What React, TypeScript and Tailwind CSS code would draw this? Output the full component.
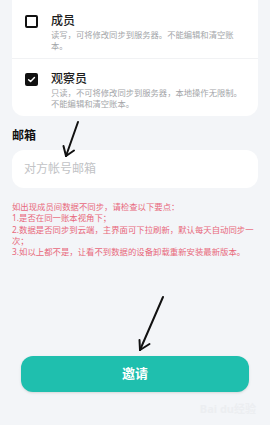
import React from "react";

type Role = {
  title: string;
  lines: string[];
  checked: boolean;
};

const roles: Role[] = [
  { title: "成员", lines: ["读写，可将修改同步到服务器。不能编辑和清空账", "本。"], checked: false },
  { title: "观察员", lines: ["只读，不可将修改同步到服务器，本地操作无限制。", "不能编辑和清空账本。"], checked: true },
];

const tips = [
  "如出现成员间数据不同步，请检查以下要点：",
  "1.是否在同一账本视角下；",
  "2.数据是否同步到云端，主界面可下拉刷新，默认每天自动同步一次；",
  "3.如以上都不是，让看不到数据的设备卸载重新安装最新版本。",
];

const CheckBox: React.FC<{ checked: boolean }> = ({ checked }) =>
  checked ? (
    <div className="flex h-[13px] w-[13px] items-center justify-center rounded-[2px] bg-[#111]">
      <svg width="9" height="9" viewBox="0 0 10 10" fill="none">
        <path d="M1.8 5.2 L4 7.3 L8.3 2.8" stroke="white" strokeWidth="1.6" strokeLinecap="round" strokeLinejoin="round" />
      </svg>
    </div>
  ) : (
    <div className="h-[13px] w-[13px] rounded-[2px] border-2 border-[#111]" />
  );

const RoleRow: React.FC<{ role: Role; first: boolean }> = ({ role, first }) => (
  <div
    className={
      first
        ? "flex pl-[13px] pr-[12px] pt-[25px] pb-[7px] border-b border-[#f1f2f4]"
        : "flex pl-[13px] pr-[12px] pt-[12px] pb-[7px]"
    }
  >
    <div className="mt-[2px] w-[26px] shrink-0">
      <CheckBox checked={role.checked} />
    </div>
    <div className="flex-1">
      <div className="text-[12px] leading-[16px] font-medium text-[#1c1c1c]">{role.title}</div>
      <div className="text-[8.3px] leading-[11px] text-[#a3a5a8]">
        {role.lines.map((l) => (
          <div key={l} className="whitespace-nowrap">{l}</div>
        ))}
      </div>
    </div>
  </div>
);

export default function App() {
  return (
    <div
      className="relative flex h-[425px] w-full flex-col overflow-hidden bg-[#f3f5f8]"
      style={{ fontFamily: '"Noto Sans", "Noto Sans CJK SC", sans-serif' }}
    >
      <div className="mx-3 -mt-3 rounded-xl bg-white">
        {roles.map((r, i) => (
          <RoleRow key={r.title} role={r} first={i === 0} />
        ))}
      </div>

      <div className="mx-3 mt-[13px] text-[12px] leading-[14px] font-bold text-[#111]">邮箱</div>

      <div className="mx-3 mt-[7px] flex h-[38px] items-center rounded-xl bg-white px-3 text-[12px] text-[#c2c3c6]">
        对方帐号邮箱
      </div>

      <div className="mx-3 mt-[13px] text-[8.4px] leading-[11.3px] text-[#e8687b]">
        {tips.map((t) => (
          <div key={t}>{t}</div>
        ))}
      </div>

      <button className="mx-[21px] mt-auto mb-[33px] flex h-[36px] items-center justify-center rounded-xl bg-[#1fbfae] text-[13px] font-bold text-white shadow-sm">
        邀请
      </button>

      <div className="absolute right-[14px] bottom-[8px] text-[11px] font-bold text-[#eceef1]">Bai du经验</div>

      <svg className="absolute left-0 top-0" width="270" height="425" fill="none">
        <g stroke="#111" strokeWidth="2" strokeLinecap="round">
          <path d="M78 122 L66 156" />
          <path d="M66 156 L63.5 146" />
          <path d="M66 156 L74 150.5" />
          <path d="M163 297 L140 350" />
          <path d="M140 350 L139.5 340" />
          <path d="M140 350 L149.5 344" />
        </g>
      </svg>
    </div>
  );
}
